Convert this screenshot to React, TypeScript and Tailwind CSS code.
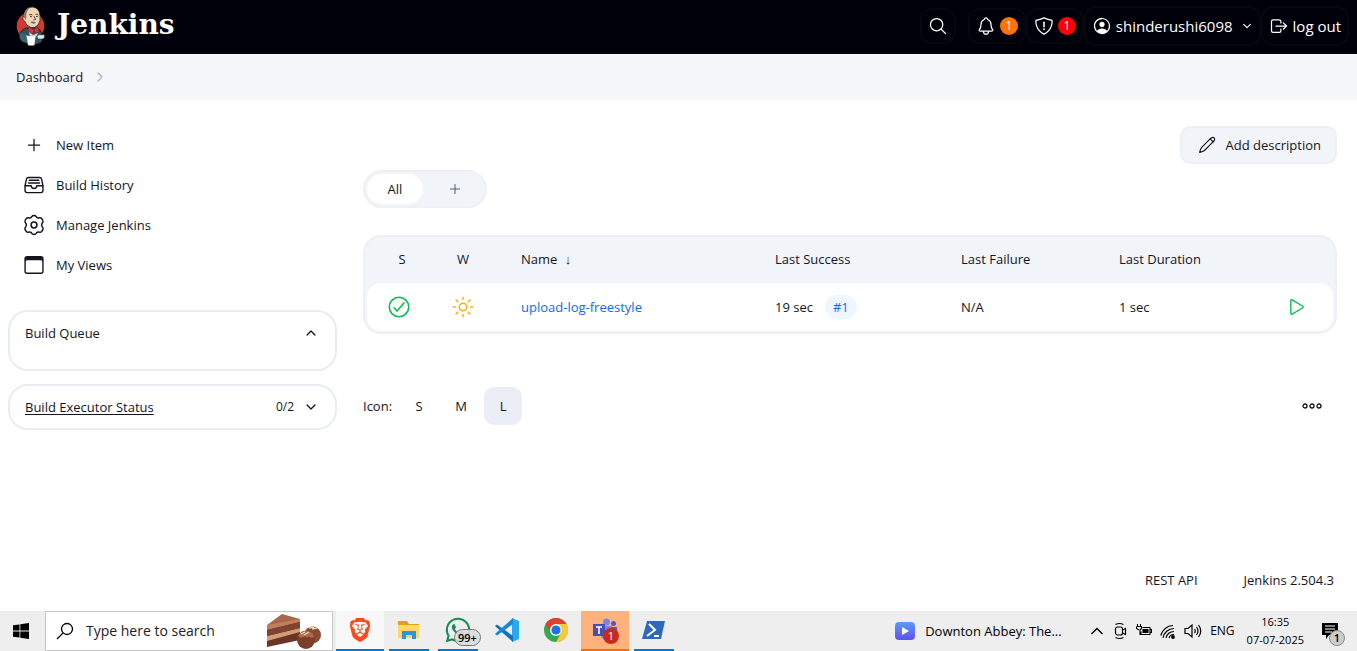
import type { ReactNode } from "react";
import {
  IoAdd,
  IoBrowsersOutline,
  IoCheckmarkCircleOutline,
  IoChevronDown,
  IoChevronForward,
  IoChevronUp,
  IoFileTrayFullOutline,
  IoLogOutOutline,
  IoNotificationsOutline,
  IoPersonCircleOutline,
  IoPlayOutline,
  IoSearchOutline,
  IoSunnyOutline,
} from "react-icons/io5";
import { SiBrave } from "react-icons/si";
import { FaWhatsapp } from "react-icons/fa";

function ButlerLogo() {
  return (
    <svg viewBox="0 0 32 40" className="h-10 w-8" aria-hidden="true">
      <circle cx="15.500" cy="20" r="13.800" fill="#d33833" />
      <path d="M5 27 Q9 21 14 22 L22 22 Q27 24 27 31 L27 36 Q18 41 9 36 Z" fill="#335061" stroke="#121820" strokeWidth="0.8" />
      <path d="M5 27 Q3 33 8 36 L12 37 L12 28 Z" fill="#3d6274" />
      <path d="M9 8 Q11 0.800 17.500 1 Q24 1.500 25 9 Q26 15 23 19 Q20 22.500 16 21.500 Q11 20 9.500 15 Q7.500 14 7.800 11.500 Q8 9.500 9.500 11 Z" fill="#f0d6b7" stroke="#231f20" strokeWidth="0.800" />
      <path d="M9 11 Q8.500 3 15 1.500 Q10.500 6 11.500 11 L10.500 14 Z" fill="#8b7a6b" />
      <path d="M14 9 q2 -1.500 3.500 0 M20.500 8.500 q2 -1 3 0.500 M19 10 l1.500 3.500 l-2 0.500" fill="none" stroke="#4a3528" strokeWidth="0.900" />
      <circle cx="16" cy="10.500" r="0.800" fill="#231f20" />
      <circle cx="22" cy="10.500" r="0.800" fill="#231f20" />
      <path d="M15 16 Q18 15 21 16.500 Q19 19 15 16 Z" fill="#6d6b6d" />
      <path d="M14 21 L19 24 L18 28 L13 25 Z M19 24 L23 21 L24 26 L20 27 Z" fill="#d33833" stroke="#81272a" strokeWidth="0.600" />
      <path d="M14 26 L18 29 L23 27 L21 31 L15 30 Z" fill="#d6dfe6" />
      <path d="M11.500 29.500 Q16 30.500 20.500 29.500 L19.500 39 Q16 40 13 39 Z" fill="#fff" stroke="#9aa0a6" strokeWidth="0.500" />
      <path d="M22 30 Q24 28 26 29 L29 28.500 Q30.500 31 28 33 L23 33 Z" fill="#e4e7ea" stroke="#333" strokeWidth="0.500" />
    </svg>
  );
}

function ShieldIcon() {
  return (
    <svg viewBox="0 0 512 512" className="size-5" fill="none" stroke="currentColor" strokeWidth="32" strokeLinecap="round" strokeLinejoin="round" aria-hidden="true">
      <path d="M463.100 112.370C373.680 96.330 336.710 84.450 256 48c-80.710 36.450-117.680 48.330-207.100 64.370C32.700 369.130 240.580 457.790 256 464c15.420-6.210 223.300-94.870 207.100-351.630z" />
      <path d="M256 160v112" strokeWidth="40" />
      <circle cx="256" cy="338" r="8" fill="currentColor" />
    </svg>
  );
}

function GearIcon() {
  return (
    <svg viewBox="0 0 24 24" className="size-6" fill="none" stroke="currentColor" strokeWidth="1.500" strokeLinecap="round" strokeLinejoin="round" aria-hidden="true">
      <path d="M9.800 3.600Q10.400 2.500 12 2.500T14.200 3.600Q14.900 5.100 16.600 4.900Q19 4.500 19.800 5.700Q21.600 7.600 21 9Q19.500 10.900 19.700 12Q19.500 13.100 21 15Q21.600 16.400 19.800 18.300Q19 19.500 16.600 19.100Q14.900 18.900 14.200 20.400Q13.600 21.500 12 21.500T9.800 20.400Q9.100 18.900 7.400 19.100Q5 19.500 4.200 18.300Q2.400 16.400 3 15Q4.500 13.100 4.300 12Q4.500 10.900 3 9Q2.400 7.600 4.200 5.700Q5 4.500 7.400 4.900Q9.100 5.100 9.800 3.600Z" />
      <circle cx="12" cy="12" r="2.900" />
    </svg>
  );
}

function PencilIcon() {
  return (
    <svg viewBox="0 0 24 24" className="size-[22px]" fill="none" stroke="currentColor" strokeWidth="1.300" strokeLinecap="round" strokeLinejoin="round" aria-hidden="true">
      <path d="M15.400 5.400 6 14.800Q4.800 16.200 4 20Q7.800 19.200 9.200 18L18.600 8.600" />
      <path d="M15.400 5.400 17 4.200Q18.500 3.200 19.800 4.300Q21 5.700 19.900 7.100L18.600 8.600L15.400 5.400" />
    </svg>
  );
}

const links: { label: string; icon: ReactNode }[] = [
  { label: "New Item", icon: <IoAdd className="size-5" /> },
  { label: "Build History", icon: <IoFileTrayFullOutline className="size-[22px]" /> },
  { label: "Manage Jenkins", icon: <GearIcon /> },
  { label: "My Views", icon: <IoBrowsersOutline className="size-[22px]" /> },
];

function Header() {
  const box = "flex items-center rounded-xl border-2 border-[#07070e]";
  return (
    <header className="flex h-[54px] items-center justify-between bg-[#00000a] pr-2 pb-0.5 pl-[15px] text-white">
      <a href="#home" className="flex items-center gap-2.5">
        <ButlerLogo />
        <span className="pb-0.5 font-['DejaVu_Serif','Liberation_Serif',serif] text-[28px] leading-10 font-bold">Jenkins</span>
      </a>
      <div className="flex items-center text-[15px]">
        <button type="button" aria-label="Search" className={`${box} mr-3 size-9 justify-center`}>
          <IoSearchOutline className="size-5" />
        </button>
        <button type="button" aria-label="Notifications" className={`${box} h-9 gap-1 px-1.5`}>
          <IoNotificationsOutline className="size-5" />
          <span className="flex size-[18px] items-center justify-center rounded-full bg-[#ff7300] text-xs">1</span>
        </button>
        <button type="button" aria-label="Security warnings" className={`${box} h-9 gap-1 px-1.5`}>
          <ShieldIcon />
          <span className="flex size-[18px] items-center justify-center rounded-full bg-[#ff0000] text-xs">1</span>
        </button>
        <button type="button" className={`${box} h-10 px-1.5`}>
          <IoPersonCircleOutline className="mr-1 size-5" />
          <span>shinderushi6098</span>
          <IoChevronDown className="ml-2 size-3" />
        </button>
        <a href="#logout" className={`${box} h-10 gap-1 px-1.5`}>
          <IoLogOutOutline className="size-5" />
          log out
        </a>
      </div>
    </header>
  );
}

function Sidebar() {
  return (
    <aside className="w-[345px] shrink-0 px-2 pt-[25px]">
      <nav>
        {links.map((l) => (
          <a key={l.label} href="#nav" className="flex h-10 items-center gap-2.5 pl-3.5">
            <span className="flex w-6 justify-center">{l.icon}</span>
            {l.label}
          </a>
        ))}
      </nav>
      <section className="mt-[25px] h-[61px] rounded-[20px] border-2 border-[#e8ecf3] px-[15px] pt-[11px]">
        <div className="flex items-center justify-between">
          <span>Build Queue</span>
          <button type="button" aria-label="Collapse build queue" className="pr-0.5">
            <IoChevronUp className="size-3.5" />
          </button>
        </div>
      </section>
      <section className="mt-[13px] flex h-[46px] items-center rounded-[20px] border-2 border-[#e8ecf3] px-[15px]">
        <a href="#executors" className="grow underline underline-offset-2">Build Executor Status</a>
        <span className="mr-2.5 text-xs">0/2</span>
        <button type="button" aria-label="Expand build executor status" className="pr-0.5">
          <IoChevronDown className="size-3.5" />
        </button>
      </section>
    </aside>
  );
}

function JobTable() {
  const cell = "h-12 bg-white";
  const head = "h-[46px] px-4 pb-0.5 font-normal";
  return (
    <div className="mt-[27px] rounded-[18px] border-2 border-[#edf1f5] bg-[#f1f5f9] px-0.5 pb-px">
      <table className="w-full table-fixed border-separate border-spacing-0 text-left">
        <colgroup>
          <col className="w-16" />
          <col className="w-16" />
          <col />
          <col className="w-[186px]" />
          <col className="w-[158px]" />
          <col className="w-[158px]" />
          <col className="w-[72px]" />
        </colgroup>
        <thead>
          <tr>
            <th className="h-[46px] pb-0.5 pl-1.5 text-center font-normal">S</th>
            <th className="h-[46px] pb-0.5 text-center font-normal">W</th>
            <th className="h-[46px] pb-0.5 pl-[26px] font-normal">Name <span className="ml-1">↓</span></th>
            <th className={head}>Last Success</th>
            <th className={head}>Last Failure</th>
            <th className={head}>Last Duration</th>
            <th className={head} aria-label="Actions" />
          </tr>
        </thead>
        <tbody>
          <tr>
            <td className={`${cell} rounded-l-[14px]`}><IoCheckmarkCircleOutline title="Success" className="mx-auto size-[26px] text-[#0cbd54]" /></td>
            <td className={cell}><IoSunnyOutline title="100%" className="mx-auto size-6 stroke-[12px] text-[#fcae17]" /></td>
            <td className={`${cell} pl-[26px]`}><a href="#job" className="text-[#0b6cf5]">upload-log-freestyle</a></td>
            <td className={`${cell} px-4`}>
              19 sec
              <a href="#build" className="ml-3 inline-block rounded-full bg-[#f0f6ff] px-2 leading-6 text-[#0b6cf5]">#1</a>
            </td>
            <td className={`${cell} px-4`}>N/A</td>
            <td className={`${cell} px-4`}>1 sec</td>
            <td className={`${cell} rounded-r-[14px]`}>
              <button type="button" aria-label="Schedule a build" className="flex w-full justify-center text-[#0cbd54]">
                <IoPlayOutline className="size-[22px]" />
              </button>
            </td>
          </tr>
        </tbody>
      </table>
    </div>
  );
}

function Main() {
  return (
    <main className="flex min-w-0 grow flex-col pt-[26px] pr-5 pl-[18px]">
      <button type="button" className="flex h-[38px] items-center gap-2 self-end rounded-[10px] border-2 border-[#edf1f5] bg-[#f1f5f9] px-3.5">
        <PencilIcon />
        Add description
      </button>
      <div className="mt-1.5 flex h-[38px] w-[124px] rounded-full border-2 border-[#edf1f5] bg-[#f1f5f9] p-0.5">
        <button type="button" className="w-14 rounded-full bg-white">All</button>
        <button type="button" aria-label="New view" className="flex grow items-center justify-center pl-1 text-[#4d5b78]">
          <IoAdd className="size-4" />
        </button>
      </div>
      <JobTable />
      <div className="mt-[53px] flex items-center">
        <span className="mr-2">Icon:</span>
        <div className="flex gap-1">
          <button type="button" className="size-[38px]">S</button>
          <button type="button" className="size-[38px]">M</button>
          <button type="button" className="size-[38px] rounded-[10px] bg-[#ebeef6]">L</button>
        </div>
        <button type="button" aria-label="More actions" className="mr-3.5 ml-auto">
          <svg viewBox="0 0 22 8" className="h-2 w-[22px]" fill="none" stroke="currentColor" strokeWidth="1.300">
            <circle cx="4" cy="4" r="2" />
            <circle cx="11" cy="4" r="2" />
            <circle cx="18" cy="4" r="2" />
          </svg>
        </button>
      </div>
    </main>
  );
}

function CakeIcon() {
  return (
    <svg viewBox="0 0 56 36" className="h-9 w-14" aria-hidden="true">
      <path d="M1 12 16 1 34 6 34 9 1 17Z" fill="#a8694b" />
      <path d="M1 16 34 7 34 27 1 34Z" fill="#6b3526" />
      <path d="M1 12v5L34 9V6Z" fill="#bf7e5c" />
      <path d="M1 23 34 15v4L1 28Z" fill="#d69a77" />
      <path d="M1 17v6l33-8V9Z" fill="#7e4430" />
      <circle cx="46.500" cy="22" r="8.500" fill="#8a4b35" />
      <circle cx="40" cy="27" r="9" fill="#7a3e2b" />
      <path d="M32 23q3-6 9-5t7 6q-3 2-5-1-2 3-4 0-3 3-7 0Z" fill="#b06e4f" />
      <path d="m35 21 4-2m-1 3 5-3m0-4 5-1m-2 2 5-1" stroke="#efd6ad" strokeWidth="1.300" />
    </svg>
  );
}

function FolderIcon() {
  return (
    <svg viewBox="0 0 24 24" className="size-6" aria-hidden="true">
      <path d="M1 3h9l2 3h10v4H1Z" fill="#e0a21b" />
      <path d="M1 7h21v13H1Z" fill="#ffd766" />
      <path d="M5 13h14v8h-4v-4H9v4H5Z" fill="#2f94dc" />
    </svg>
  );
}

function CodeIcon() {
  return (
    <svg viewBox="0 0 24 24" className="size-6" aria-hidden="true">
      <path d="m17 0 7 3v18l-7 3Z" fill="#29a9f2" />
      <path d="M0 8 2 6.500 18 18v6L1 9Z" fill="#0b74bd" />
      <path d="M0 16 2 17.500 18 6V0L1 15Z" fill="#1789d4" />
    </svg>
  );
}

function ChromeIcon() {
  return (
    <svg viewBox="0 0 24 24" className="size-6" aria-hidden="true">
      <circle cx="12" cy="12" r="12" fill="#34a853" />
      <path d="M1.600 6A12 12 0 0 1 22.400 6H12A6 6 0 0 0 6.800 15Z" fill="#e53e30" />
      <path d="M22.400 6A12 12 0 0 1 12 24L17.200 15A6 6 0 0 0 12 6Z" fill="#fcc934" />
      <circle cx="12" cy="12" r="6" fill="#fff" />
      <circle cx="12" cy="12" r="4.600" fill="#1a73e8" />
    </svg>
  );
}

function TeamsIcon() {
  return (
    <svg viewBox="0 0 24 24" className="size-6" aria-hidden="true">
      <circle cx="13.500" cy="4" r="3.500" fill="#7b83eb" />
      <circle cx="20.500" cy="5.500" r="2.500" fill="#5059c9" />
      <path d="M8 8h11v9a6 6 0 0 1-11 2Z" fill="#7b83eb" />
      <path d="M18 9h6v6a4 4 0 0 1-6 3Z" fill="#5059c9" />
      <path d="M0 6h12v12H0Z" fill="#464eb8" />
      <path d="M3 9h6M6 9v7" stroke="#fff" strokeWidth="1.600" />
    </svg>
  );
}

function ShellIcon() {
  return (
    <svg viewBox="0 0 24 20" className="h-5 w-6" aria-hidden="true">
      <path d="M5 1h18l-4 18H0Z" fill="#2f69bd" />
      <path d="m7 4 6 6-8 6M12 16h5" fill="none" stroke="#fff" strokeWidth="2" />
    </svg>
  );
}

function Tray() {
  return (
    <div className="flex items-center gap-2">
      <svg viewBox="0 0 14 14" className="size-3.5" fill="none" stroke="currentColor" strokeWidth="1.300" aria-hidden="true">
        <path d="m1.500 10 5.500-5.500L12.500 10" />
      </svg>
      <svg viewBox="0 0 16 18" className="h-[18px] w-4" fill="none" stroke="currentColor" strokeWidth="1.200" aria-hidden="true">
        <rect x="3.500" y="5" width="7" height="8" rx="2" />
        <path d="m10.500 8 3-1.500v6l-3-1.500M3.500 2.500q4-2 8 0M3.500 15.500q4 2 8 0" />
      </svg>
      <svg viewBox="0 0 16 14" className="h-3.5 w-4" fill="none" stroke="currentColor" strokeWidth="1.100" aria-hidden="true">
        <path d="M6.500 3.500H14v7H5V7.500M14 5.500h1.500v3H14M1.500 0v2.500M4.500 0v2.500M.500 2.500h5v2L4 6v4.500H5M3 6 .500 4.500v-2" />
        <path d="M7 5.500h5v3H7Z" fill="currentColor" />
      </svg>
      <svg viewBox="0 0 16 16" className="size-4" fill="none" stroke="currentColor" strokeWidth="1.200" aria-hidden="true">
        <path d="M3 15A11 11 0 0 1 14 5.500M6 15A8 8 0 0 1 14 8.500M9 15A5 5 0 0 1 14 11.500M.800 12.500A13 13 0 0 1 13 2.500" />
        <circle cx="13" cy="14" r="1.300" fill="currentColor" />
      </svg>
      <svg viewBox="0 0 18 16" className="h-4 w-[18px]" fill="none" stroke="currentColor" strokeWidth="1.200" aria-hidden="true">
        <path d="M1 5.500h3L8 2v12l-4-3.500H1ZM10.500 6q1.500 2 0 4M12.500 4q3 4 0 8M14.500 2q4.500 6 0 12" />
      </svg>
      <span className="text-xs">ENG</span>
    </div>
  );
}

function Taskbar() {
  const app = "flex h-full w-10 items-center justify-center border-b-2";
  return (
    <footer className="flex h-10 items-center bg-[#eeeeee] text-black">
      <button type="button" aria-label="Start" className="flex h-full w-[45px] items-center justify-center pr-1">
        <svg viewBox="0 0 16 16" className="size-4" aria-hidden="true">
          <path d="M0 2.300 6.500 1.400v6.100H0ZM7.300 1.300 16 0v7.500H7.300ZM0 8.400h6.500v6.200L0 13.700ZM7.300 8.400H16V16l-8.700-1.300Z" />
        </svg>
      </button>
      <label className="flex h-full w-72 items-center border border-[#c6c6c6] bg-white pl-2.5">
        <svg viewBox="0 0 18 18" className="mr-3 size-[18px] shrink-0" fill="none" stroke="currentColor" strokeWidth="1.300" aria-hidden="true">
          <circle cx="11" cy="7" r="5.500" />
          <path d="m7 11-6 6" />
        </svg>
        <input type="text" aria-label="Search the computer" placeholder="Type here to search" className="w-0 grow text-sm outline-none placeholder:text-[#222]" />
        <span className="mr-2.5 shrink-0"><CakeIcon /></span>
      </label>
      <button type="button" aria-label="Brave" className="ml-[3px] flex h-full w-12 items-center justify-center border-b-2 border-[#0078d4] bg-[#f8f8f8]">
        <SiBrave className="size-6 text-[#fb4b1e]" />
      </button>
      <button type="button" aria-label="File Explorer" className={`${app} ml-[5px] border-[#0078d4]`}><FolderIcon /></button>
      <button type="button" aria-label="WhatsApp" className={`${app} relative ml-[9px] border-[#0078d4]`}>
        <FaWhatsapp className="size-7 text-[#1a8a54]" />
        <span className="absolute top-[18px] left-4 rounded-full border border-[#777] bg-[#dcdcdc]/90 px-[3px] text-[11px] leading-[15px] font-semibold">99+</span>
      </button>
      <button type="button" aria-label="Visual Studio Code" className={`${app} ml-[9px] border-transparent`}><CodeIcon /></button>
      <button type="button" aria-label="Chrome" className={`${app} ml-[9px] border-transparent`}><ChromeIcon /></button>
      <button type="button" aria-label="Teams" className="relative ml-[5px] flex h-full w-12 items-center justify-center border-b-2 border-[#fc6d05] bg-[#ffb27c]">
        <TeamsIcon />
        <span className="absolute top-[17px] left-[22px] flex size-4 items-center justify-center rounded-full bg-[#c42b1c] text-[11px] text-white">1</span>
      </button>
      <button type="button" aria-label="PowerShell" className={`${app} ml-[5px] border-[#0078d4]`}><ShellIcon /></button>
      <div className="ml-auto flex items-center">
        <svg viewBox="0 0 20 18" className="mr-2.5 h-[18px] w-5" aria-hidden="true">
          <defs>
            <linearGradient id="play" x2="0" y2="1">
              <stop stopColor="#5b9cf6" />
              <stop offset="1" stopColor="#6150ef" />
            </linearGradient>
          </defs>
          <rect width="20" height="18" rx="4" fill="url(#play)" />
          <path d="m7 5 7 4-7 4Z" fill="#fff" />
        </svg>
        <span className="w-[140px] text-[13px] whitespace-nowrap">Downton Abbey: The...</span>
        <div className="ml-[25px]"><Tray /></div>
        <div className="ml-3 text-center text-[11px] leading-[18px]">
          <div>16:35</div>
          <div>07-07-2025</div>
        </div>
        <button type="button" aria-label="Action center" className="relative mr-[18px] ml-[17px]">
          <svg viewBox="0 0 18 18" className="size-[18px]" aria-hidden="true">
            <path d="M1 1h16v12H8l-3 4v-4H1Z" />
            <path d="M4 4h10M4 7h10M4 10h7" stroke="#fff" />
          </svg>
          <span className="absolute top-2 left-2 flex size-4 items-center justify-center rounded-full border border-[#888] bg-[#ccc] text-[11px] font-semibold">1</span>
        </button>
      </div>
    </footer>
  );
}

export default function App() {
  return (
    <div className="flex min-h-screen flex-col bg-white font-['Open_Sans','Noto_Sans',sans-serif] text-[13px] leading-5 text-[#14141f]">
      <Header />
      <div className="flex h-[46px] items-center gap-2.5 bg-[#f6f7f9] pl-4">
        <a href="#dashboard">Dashboard</a>
        <IoChevronForward className="size-3.5 text-[#9fb3cf]" />
      </div>
      <div className="flex grow">
        <Sidebar />
        <Main />
      </div>
      <div className="flex justify-end gap-[46px] pt-4 pr-[23px] pb-[21px]">
        <a href="#api">REST API</a>
        <a href="#version">Jenkins 2.504.3</a>
      </div>
      <Taskbar />
    </div>
  );
}
